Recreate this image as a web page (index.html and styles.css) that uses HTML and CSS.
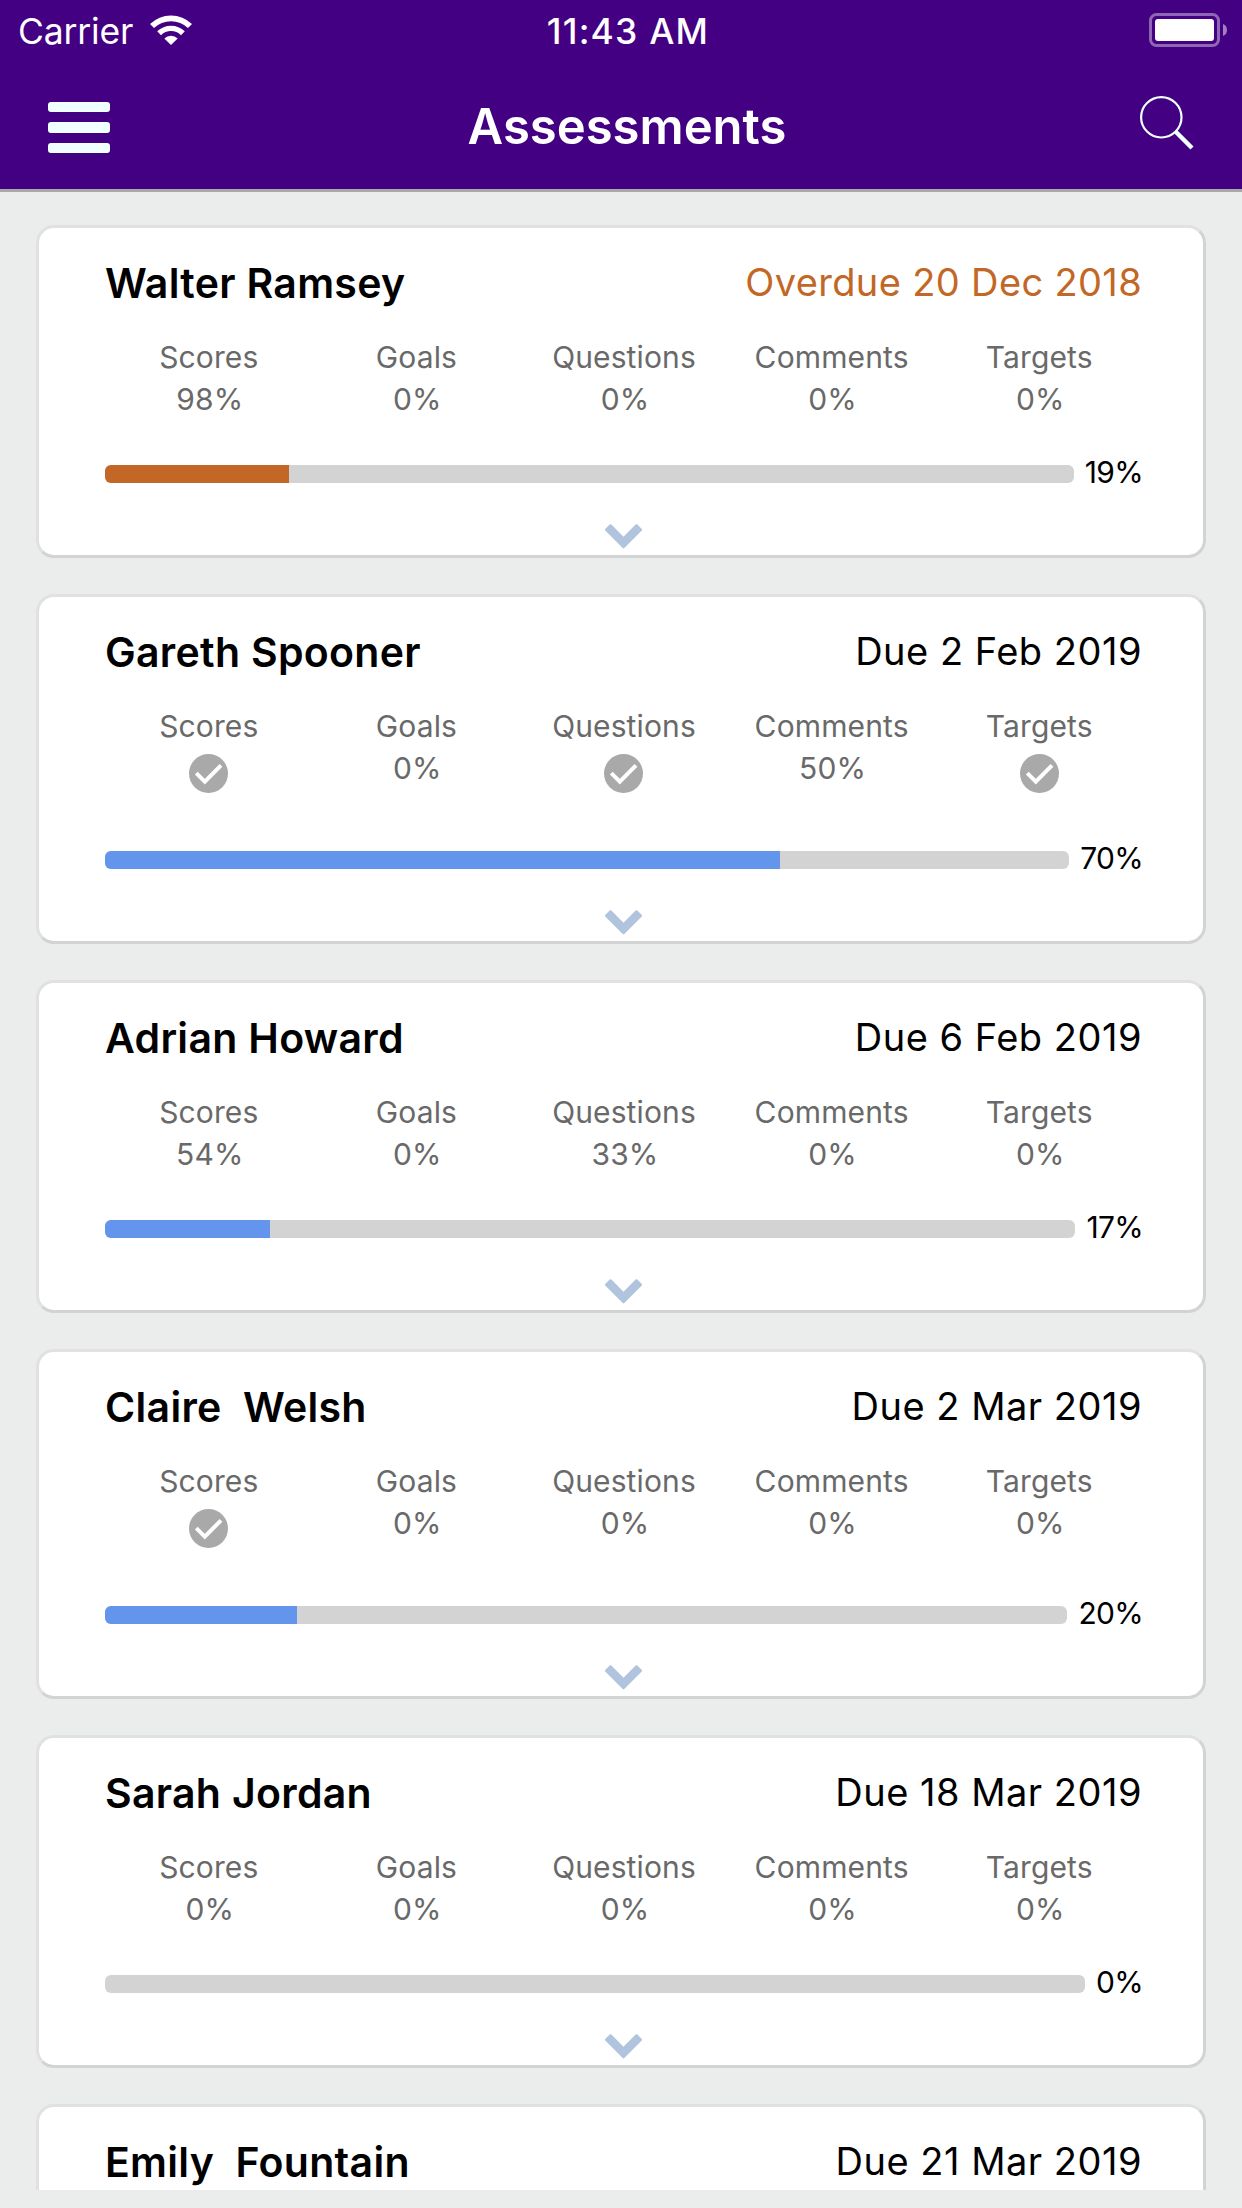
FILE: index.html
```html
<!DOCTYPE html>
<html lang="en">
<head>
<meta charset="utf-8">
<title>Assessments</title>
<link rel="stylesheet" href="styles.css">
</head>
<body>
<svg class="defs" aria-hidden="true">
  <symbol id="check" viewBox="0 0 39 39">
    <circle cx="19.5" cy="19.5" r="19.5" fill="#a9a9a9"/>
    <path d="M7.3 19.2 L15.8 27.6 L32 11.3" fill="none" stroke="#fff" stroke-width="4"/>
  </symbol>
  <symbol id="chevron" viewBox="0 0 38 25">
    <path d="M5.1 .6 Q6 0 6.9 .6 L19 12.7 L31.1 .6 Q32 0 32.9 .6 L37.3 5 Q38 5.8 37.3 6.6 L19.8 24.1 Q19 24.8 18.2 24.1 L.7 6.6 Q0 5.8 .7 5 Z" fill="#b0c4de"/>
  </symbol>
</svg>

<header class="header">
  <div class="status">
    <div class="carrier">
      <span>Carrier</span>
      <svg class="wifi" viewBox="0 0 42 30">
        <path d="M0 9 A30 30 0 0 1 42 9 L38 13 A24.5 24.5 0 0 0 4 13 Z" fill="#fff"/>
        <path d="M7.2 16.3 A19.8 19.8 0 0 1 34.8 16.3 L31 20.2 A14.3 14.3 0 0 0 11 20.2 Z" fill="#fff"/>
        <path d="M14.3 23.5 A9.8 9.8 0 0 1 27.7 23.5 L21 30 Z" fill="#fff"/>
      </svg>
    </div>
    <div class="clock">11:43 AM</div>
    <svg class="battery" viewBox="0 0 79 34">
      <rect x="1.5" y="1.5" width="68" height="31" rx="6" fill="none" stroke="#fff" stroke-opacity=".4" stroke-width="3"/>
      <rect x="6" y="6" width="59" height="22" rx="3" fill="#fff"/>
      <path d="M74 11 C79.3 12.5 79.3 21.5 74 23 Z" fill="#fff" fill-opacity=".5"/>
    </svg>
  </div>
  <nav class="nav">
    <div class="menu"><i></i><i></i><i></i></div>
    <h1 class="title">Assessments</h1>
    <svg class="search" viewBox="0 0 54 54">
      <circle cx="21.3" cy="21.3" r="20.2" fill="none" stroke="#f0ffff" stroke-width="2.2"/>
      <path d="M35.5 35.5 L52 52" stroke="#f0ffff" stroke-width="4.5"/>
    </svg>
  </nav>
</header>

<main class="list">
  <article class="card">
    <div class="head"><h2 class="name">Walter Ramsey</h2><span class="date overdue">Overdue 20 Dec 2018</span></div>
    <div class="stats">
      <div><p>Scores</p><p class="value">98%</p></div><div><p>Goals</p><p class="value">0%</p></div><div><p>Questions</p><p class="value">0%</p></div><div><p>Comments</p><p class="value">0%</p></div><div><p>Targets</p><p class="value">0%</p></div>
    </div>
    <div class="progress"><div class="track"><div class="fill fill-overdue" style="width:19%"></div></div><span class="percent">19%</span></div>
    <svg class="chevron"><use href="#chevron"/></svg>
  </article>

  <article class="card">
    <div class="head"><h2 class="name">Gareth Spooner</h2><span class="date">Due 2 Feb 2019</span></div>
    <div class="stats">
      <div><p>Scores</p><svg class="check"><use href="#check"/></svg></div><div><p>Goals</p><p class="value">0%</p></div><div><p>Questions</p><svg class="check"><use href="#check"/></svg></div><div><p>Comments</p><p class="value">50%</p></div><div><p>Targets</p><svg class="check"><use href="#check"/></svg></div>
    </div>
    <div class="progress"><div class="track"><div class="fill" style="width:70%"></div></div><span class="percent">70%</span></div>
    <svg class="chevron"><use href="#chevron"/></svg>
  </article>

  <article class="card">
    <div class="head"><h2 class="name">Adrian Howard</h2><span class="date">Due 6 Feb 2019</span></div>
    <div class="stats">
      <div><p>Scores</p><p class="value">54%</p></div><div><p>Goals</p><p class="value">0%</p></div><div><p>Questions</p><p class="value">33%</p></div><div><p>Comments</p><p class="value">0%</p></div><div><p>Targets</p><p class="value">0%</p></div>
    </div>
    <div class="progress"><div class="track"><div class="fill" style="width:17%"></div></div><span class="percent">17%</span></div>
    <svg class="chevron"><use href="#chevron"/></svg>
  </article>

  <article class="card">
    <div class="head"><h2 class="name">Claire  Welsh</h2><span class="date">Due 2 Mar 2019</span></div>
    <div class="stats">
      <div><p>Scores</p><svg class="check"><use href="#check"/></svg></div><div><p>Goals</p><p class="value">0%</p></div><div><p>Questions</p><p class="value">0%</p></div><div><p>Comments</p><p class="value">0%</p></div><div><p>Targets</p><p class="value">0%</p></div>
    </div>
    <div class="progress"><div class="track"><div class="fill" style="width:20%"></div></div><span class="percent">20%</span></div>
    <svg class="chevron"><use href="#chevron"/></svg>
  </article>

  <article class="card">
    <div class="head"><h2 class="name">Sarah Jordan</h2><span class="date">Due 18 Mar 2019</span></div>
    <div class="stats">
      <div><p>Scores</p><p class="value">0%</p></div><div><p>Goals</p><p class="value">0%</p></div><div><p>Questions</p><p class="value">0%</p></div><div><p>Comments</p><p class="value">0%</p></div><div><p>Targets</p><p class="value">0%</p></div>
    </div>
    <div class="progress"><div class="track"></div><span class="percent">0%</span></div>
    <svg class="chevron"><use href="#chevron"/></svg>
  </article>

  <article class="card card-cut">
    <div class="head"><h2 class="name">Emily  Fountain</h2><span class="date">Due 21 Mar 2019</span></div>
  </article>
</main>
</body>
</html>
```
FILE: styles.css
```css
* { box-sizing: border-box; margin: 0; padding: 0; }

body {
  width: 1242px;
  height: 2208px;
  overflow: hidden;
  display: flex;
  flex-direction: column;
  background: #ebedec;
  font-family: Inter, "Liberation Sans", sans-serif;
  color: #000;
}

svg { display: block; }
.defs { display: none; }

.header {
  flex: none;
  height: 192px;
  background: #430082;
  border-bottom: 3px solid #a9a9a9;
  color: #fff;
}

.status {
  display: grid;
  grid-template-columns: 1fr auto 1fr;
  height: 60px;
  padding: 10px 14px 0 18px;
  font-size: 35.5px;
  line-height: 43px;
}
.carrier { display: flex; letter-spacing: -.15px; }
.wifi { width: 42px; height: 30px; margin: 5px 0 0 17px; }
.clock { padding-left: 10px; font-weight: 500; letter-spacing: 1.2px; }
.battery { width: 79px; height: 34px; margin-top: 3px; justify-self: end; }

.nav {
  display: grid;
  grid-template-columns: 1fr auto 1fr;
  height: 129px;
  padding: 36px 48px 0;
}
.menu { display: flex; flex-direction: column; gap: 10px; padding-top: 5.5px; }
.menu i { width: 62px; height: 10.5px; border-radius: 3px; background: #f0ffff; }
.title { padding: 1px 0 0 12px; font-size: 49px; line-height: 60px; font-weight: 600; }
.search { width: 54px; height: 54px; justify-self: end; }

.list {
  flex: none;
  display: flex;
  flex-direction: column;
  gap: 36px;
  height: 1998px;
  padding: 33px 36px 0;
  overflow: hidden;
}

.card {
  flex: none;
  padding: 30px 60px 6px 66px;
  background: #fff;
  border: 3px solid;
  border-color: #e1e1e1 #d3d3d3 #d3d3d3 #e1e1e1;
  border-radius: 18px;
}
.card-cut { height: 333px; }

.head { display: flex; justify-content: space-between; align-items: flex-start; height: 50px; }
.name {
  font-size: 41px;
  line-height: 50px;
  font-weight: 600;
  letter-spacing: .3px;
  white-space: pre;
}
.date { padding-right: 1px; font-size: 38px; line-height: 48px; letter-spacing: .5px; }
.overdue { color: #c26725; letter-spacing: .35px; }

.stats {
  display: grid;
  grid-template-columns: repeat(5, 1fr);
  margin-top: 28px;
  color: #696969;
  font-size: 30px;
  line-height: 42px;
  letter-spacing: .12px;
  text-align: center;
}
.value { padding-left: 2px; }
.check { width: 39px; height: 39px; margin: 7px auto 13px; }

.progress { display: flex; align-items: center; gap: 11px; height: 42px; margin-top: 33px; }
.track { flex: 1; height: 18px; border-radius: 6px; background: #d3d3d3; overflow: hidden; }
.fill { height: 100%; background: #6495ed; }
.fill-overdue { background: #c26725; }
.percent {
  padding-bottom: 5px;
  font-size: 30px;
  line-height: 36px;
  letter-spacing: -.7px;
}

.chevron { width: 38px; height: 25px; margin: 29px auto 0; transform: translateX(-.5px); }
```
